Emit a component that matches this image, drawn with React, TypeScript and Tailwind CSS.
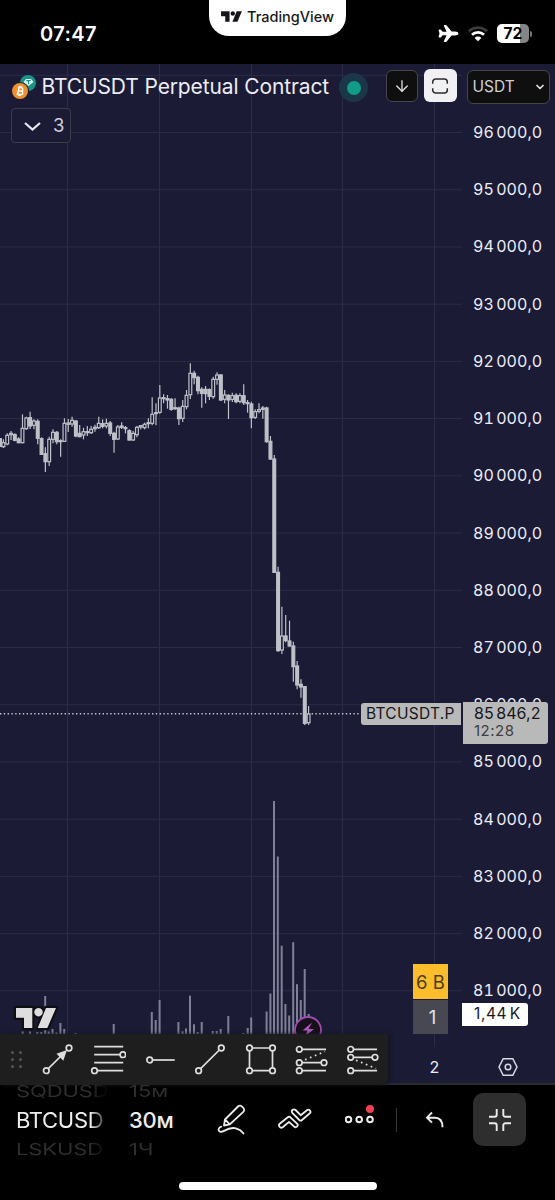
import { ArrowDown, ChevronDown } from "lucide-react";
import { IoAirplane } from "react-icons/io5";

type Candle = [high: number, low: number, top: number, bottom: number, filled: 0 | 1];

// Values are in thirds of a pixel below CANDLE_TOP
const CANDLE_TOP = 286;
const CANDLE_STEP = 3.815;

const candles: Candle[] = [
  [268, 294, 278, 290, 0],
  [250, 286, 256, 282, 0],
  [243, 270, 250, 254, 0],
  [250, 274, 254, 271, 1],
  [262, 280, 267, 278, 1],
  [193, 280, 235, 278, 0],
  [200, 240, 204, 236, 0],
  [185, 237, 203, 228, 1],
  [208, 238, 213, 226, 0],
  [208, 283, 214, 265, 1],
  [262, 315, 266, 313, 1],
  [292, 366, 311, 335, 1],
  [260, 348, 268, 335, 0],
  [238, 280, 247, 268, 0],
  [243, 283, 247, 275, 1],
  [268, 320, 272, 275, 1],
  [205, 276, 220, 274, 0],
  [207, 246, 219, 223, 0],
  [200, 230, 211, 222, 0],
  [211, 262, 213, 258, 1],
  [225, 262, 250, 260, 1],
  [233, 268, 245, 255, 0],
  [228, 258, 245, 248, 1],
  [228, 252, 238, 248, 0],
  [224, 245, 232, 236, 0],
  [200, 237, 220, 233, 0],
  [208, 235, 221, 229, 1],
  [206, 235, 220, 228, 0],
  [213, 258, 219, 250, 1],
  [245, 308, 250, 268, 1],
  [225, 270, 231, 267, 0],
  [217, 237, 228, 232, 1],
  [228, 250, 233, 236, 1],
  [238, 272, 242, 270, 1],
  [243, 272, 250, 270, 0],
  [228, 262, 232, 254, 0],
  [225, 238, 227, 231, 0],
  [218, 238, 223, 233, 0],
  [205, 235, 218, 221, 0],
  [142, 226, 193, 220, 0],
  [160, 226, 188, 191, 1],
  [105, 191, 144, 187, 0],
  [133, 160, 143, 146, 0],
  [135, 176, 146, 150, 1],
  [145, 182, 148, 178, 1],
  [145, 180, 173, 176, 0],
  [170, 225, 174, 206, 1],
  [150, 216, 169, 205, 0],
  [120, 178, 136, 170, 0],
  [40, 147, 70, 134, 0],
  [62, 103, 70, 83, 1],
  [77, 133, 82, 122, 1],
  [112, 173, 118, 130, 1],
  [108, 160, 118, 131, 1],
  [115, 150, 119, 139, 1],
  [80, 146, 88, 140, 0],
  [67, 104, 75, 88, 0],
  [72, 153, 75, 150, 1],
  [120, 160, 135, 148, 0],
  [133, 207, 136, 150, 1],
  [128, 156, 137, 148, 0],
  [130, 160, 136, 155, 1],
  [130, 160, 137, 154, 0],
  [103, 165, 137, 158, 1],
  [150, 188, 158, 161, 1],
  [155, 235, 162, 203, 1],
  [178, 207, 185, 202, 0],
  [160, 190, 179, 184, 0],
  [168, 206, 174, 178, 1],
  [170, 278, 174, 275, 1],
  [258, 330, 274, 327, 1],
  [315, 668, 327, 667, 1],
  [650, 905, 667, 902, 1],
  [770, 912, 858, 900, 0],
  [795, 877, 858, 872, 1],
  [812, 890, 873, 888, 1],
  [875, 995, 888, 950, 1],
  [933, 1018, 948, 1005, 1],
  [988, 1043, 1003, 1011, 1],
  [1008, 1125, 1010, 1120, 1],
  [1068, 1125, 1092, 1118, 0],
];

// [x, height]
const volumes: [number, number][] = [
  [22.7, 2.5], [30, 2.5], [37.3, 2], [41.3, 2], [45.2, 38], [48.7, 2.5], [52.5, 5], [56.5, 1.5],
  [60.4, 11], [64.2, 5], [75.6, 1], [113.7, 10], [151.8, 22], [155.7, 14], [159.6, 34], [178.4, 12],
  [182.5, 2.7], [186, 5.5], [190, 38.3], [194, 9.7], [197.7, 2], [201.7, 12], [212.7, 3], [216.7, 3],
  [220.7, 5], [228.3, 18], [243.3, 1], [247.7, 6], [251.2, 16.5], [266.6, 22.5], [270.4, 40.5],
  [274, 233], [277.8, 177.5], [281.7, 88.3], [285.4, 30], [289.2, 18.5], [293.2, 91.8], [297, 49.8],
  [300.8, 34], [304.7, 65], [308.7, 20],
];

const prices = [
  "96 000,0", "95 000,0", "94 000,0", "93 000,0", "92 000,0", "91 000,0", "90 000,0", "89 000,0",
  "88 000,0", "87 000,0", "86 000,0", "85 000,0", "84 000,0", "83 000,0", "82 000,0", "81 000,0",
];

const gridX = [67.5, 159.5, 251.5, 342.5, 434.5];

export default function App() {
  return (
    <div className="flex h-[1200px] w-[555px] flex-col overflow-hidden bg-black font-['Inter',sans-serif] text-[#ececf4]">
      <StatusBar />
      <main className="relative flex h-[1021px] flex-col bg-[#1b1b36]">
        <div className="flex h-[970px]">
          <Chart />
          <PriceAxis />
        </div>
        <div className="flex h-[51px] border-b-2 border-[#29292e]">
          <Toolbar />
          <div className="flex flex-1 items-center pt-4">
            <span className="w-[93px] text-center text-[16px] leading-none">2</span>
            <svg className="ml-[17px] h-5 w-5" viewBox="0 0 20 20" fill="none" stroke="#d9d9e2" strokeWidth="1.5">
              <path d="M5.2 1.7h9.6L19 10l-4.2 8.3H5.2L1 10Z" />
              <circle cx="10" cy="10" r="2.8" />
            </svg>
          </div>
        </div>
        <ChartHeader />
      </main>
      <BottomBar />
    </div>
  );
}

const TradingViewMark = ({ className }: { className: string }) => (
  <svg className={className} viewBox="-2 -2 44 24" fill="currentColor">
    <path d="M0 0H16.3V20H8V9.7H0Z" />
    <circle cx="22.5" cy="4.2" r="4.2" />
    <path d="M30 0H40L31.3 20H21.7Z" />
  </svg>
);

const StatusBar = () => (
  <header className="flex h-16 shrink-0 items-start justify-between bg-black">
    <div className="w-[209px] pt-[22px] pl-10 text-[20px] leading-6 font-semibold tracking-[0.4px] text-white">07:47</div>
    <div className="flex h-9 w-[137px] items-center rounded-b-[20px] bg-white pb-[3px] pl-[11px] text-[#16161a]">
      <TradingViewMark className="h-[13px] w-[23px]" />
      <span className="ml-[4px] text-[14.5px] font-medium tracking-[0px]">TradingView</span>
    </div>
    <div className="flex w-[209px] items-center pt-[23px] pl-[92px] text-white">
      <IoAirplane className="h-[21px] w-[21px]" />
      <svg className="ml-[9px] h-[17px] w-5" viewBox="0 0 20 17" fill="none" strokeWidth="2.8">
        <path d="M1 6.2a13 13 0 0 1 18 0" stroke="#3c3c3c" />
        <path d="M4 9.8a8.6 8.6 0 0 1 12 0" stroke="#fff" />
        <path d="M10 16.2 6.6 13a4.8 4.8 0 0 1 6.8 0Z" fill="#fff" />
      </svg>
      <div className="ml-[9px] flex h-[19px] w-8 items-center justify-center rounded-[5px] bg-[linear-gradient(90deg,#fff_72%,#858585_72%)] text-[15.5px] font-bold text-black">
        72
      </div>
      <div className="ml-px h-[6px] w-[2px] rounded-r bg-[#777]" />
    </div>
  </header>
);

const ChartHeader = () => (
  <div className="absolute inset-x-0 top-0">
    <div className="flex items-start">
      <svg className="mt-[10px] ml-[11px] h-[26px] w-[26px] shrink-0" viewBox="0 0 26 26">
        <circle cx="17" cy="9" r="8" fill="#199386" />
        <path d="m12.5 8 2.5-3h5l2.5 3-5 4Z" fill="#e5f3f2" />
        <path d="M15.3 6.7h4.4M17.5 6.7v3.6" stroke="#199386" strokeWidth="1.2" />
        <circle cx="9" cy="17" r="9" fill="#1b1b36" />
        <circle cx="9" cy="17" r="8" fill="#ee9030" />
        <g transform="rotate(12 9 17)" fill="none" stroke="#fff" strokeWidth="1.4">
          <path d="M7.3 13.5v7M6.2 13.6h3.6a1.6 1.6 0 0 1 0 3.3H7.3h3a1.7 1.7 0 0 1 0 3.5H6.2M8.3 12v1.5M10 12v1.5M8.3 20.5V22M10 20.5V22" />
        </g>
      </svg>
      <h1 className="mt-[9px] ml-[4.5px] w-[297.5px] text-[21px] leading-7 tracking-[-0.12px] whitespace-nowrap">BTCUSDT Perpetual Contract</h1>
      <div className="mt-[9px] flex h-[29px] w-[29px] shrink-0 items-center justify-center rounded-full bg-[#1c3649]">
        <div className="h-[14px] w-[14px] rounded-full bg-[#109c86]" />
      </div>
      <div className="mt-[6px] ml-[18px] flex h-8 w-8 shrink-0 items-center justify-center rounded-[6px] border border-[#45454a] bg-[#0f0f10]">
        <ArrowDown size={18} strokeWidth={1.8} color="#dedede" />
      </div>
      <div className="mt-[5px] ml-[5.5px] flex h-[33px] w-[33px] shrink-0 items-center justify-center rounded-[6px] bg-[#f1f1f4]">
        <svg className="h-[18px] w-[18px]" viewBox="0 0 18 18" fill="none" stroke="#2b2b2f" strokeWidth="1.5">
          <path d="M1.700 6.700V5a3 3 0 0 1 3-3h8.600a3 3 0 0 1 3 3v1.700M1.700 11.300V13a3 3 0 0 0 3 3h8.600a3 3 0 0 0 3-3v-1.700" />
        </svg>
      </div>
      <div className="mt-[6px] ml-[10px] flex h-[34px] w-[83px] shrink-0 items-center justify-between rounded-[6px] border border-[#45454a] bg-[#0f0f10] pr-[3px] pl-[5px] text-[15.5px] text-[#cfcfd3]">
        USDT
        <ChevronDown size={12} strokeWidth={3.5} color="#dedede" />
      </div>
    </div>
    <div className="mt-[4px] ml-[11px] flex h-[35px] w-[60px] items-center rounded-[4px] border border-[#3c3c48] bg-[#1b1b36] pl-[12px]">
      <svg className="mt-px h-[9px] w-[17px]" viewBox="0 0 17 9" fill="none" stroke="#e8e8f0" strokeWidth="2.2">
        <path d="m1 1 7.5 6.5L16 1" />
      </svg>
      <span className="mt-px ml-[12px] text-[18.5px] text-[#d0d0dc]">3</span>
    </div>
  </div>
);

const Chart = () => (
  <div className="relative h-[970px] w-[462px] shrink-0">
    <svg className="h-[984px] w-[462px] overflow-visible" viewBox="0 0 462 984">
      <g stroke="#2c2c49">
        {gridX.map((x) => (
          <line key={x} x1={x} x2={x} y1="0" y2="983" />
        ))}
        {[...Array(17)].map((_, i) => (
          <line key={i} x1="0" x2="462" y1={11.3 + i * 57.22} y2={11.3 + i * 57.22} />
        ))}
      </g>
      <g fill="#7f7f97">
        {volumes.map(([x, h]) => (
          <rect key={x} x={x - 1} y={970 - h} width="2" height={h} />
        ))}
      </g>
      <line x1="0" x2="362" y1="649.8" y2="649.8" stroke="#c4c4cc" strokeWidth="1.5" strokeDasharray="1.4 2.4" />
      {candles.map(([high, low, top, bottom, filled], i) => {
        const x = 3.4 + i * CANDLE_STEP;
        const y = (v: number) => CANDLE_TOP + v / 3;
        return (
          <g key={i} stroke="#c0c0c8" strokeWidth="1.2" fill={filled ? "#c0c0c8" : "#1b1b36"}>
            <line x1={x} x2={x} y1={y(high)} y2={y(low)} />
            <rect x={x - 1.4} y={y(top)} width="2.8" height={Math.max(y(bottom) - y(top), 0.5)} />
          </g>
        );
      })}
      <rect x="0" y="374" width="2" height="9" fill="#c0c0c8" />
    </svg>
    <div className="absolute top-[639px] right-[1px] flex h-[22px] w-[100px] items-center rounded-l-[3px] bg-[#b9b9b9] pl-[5px] text-[15.5px] tracking-[0.28px] text-[#17171b]">
      BTCUSDT.P
    </div>
    <svg className="absolute top-[941px] left-[13px] h-[26px] w-[46px]" viewBox="-3 -3 46 26" fill="#dedede" stroke="#101014" strokeWidth="4.5" paintOrder="stroke" strokeLinejoin="round">
      <path d="M0 0H16.3V20H8V9.7H0ZM30 0H40L31.3 20H21.7ZM22.5 0a4.2 4.2 0 1 0 .01 0Z" />
    </svg>
    <svg className="absolute top-[952px] left-[294px] h-[28px] w-[28px]" viewBox="0 0 28 28">
      <circle cx="14" cy="14" r="13" fill="#160f1c" stroke="#a04bac" strokeWidth="1.8" />
      <path d="m18 6.5-9.5 8h5l-2.5 6 9-7.5h-5.500Z" fill="#b058be" />
    </svg>
    <div className="absolute top-[900px] left-[413px] w-[35px] text-center text-[18.5px]">
      <div className="flex h-[35px] items-center justify-center bg-[#fbbd2c] pt-[2px] text-[#4d3c14]">6 B</div>
      <div className="mt-px flex h-[34px] items-center justify-center bg-[#484852] pt-[2px] pl-1 text-[#e4e4ea]">1</div>
    </div>
  </div>
);

const PriceAxis = () => (
  <div className="relative flex-1 pt-[39.4px] pl-[11px] text-[16px] tracking-[0.05px]">
    {prices.map((price) => (
      <div key={price} className="flex h-[57.22px] items-center tabular-nums [word-spacing:-2px]">
        {price}
      </div>
    ))}
    <div className="absolute top-[638px] left-px h-[42px] w-[85px] rounded-r-[3px] bg-[#b9b9b9] pt-[2px] pl-[11px] leading-[18px] text-[#17171b]">
      <div className="[word-spacing:-2px]">85 846,2</div>
      <div className="text-[15px] tracking-[0.5px] text-[#3f3f43]">12:28</div>
    </div>
    <div className="absolute top-[939px] left-0 flex h-[23px] w-[66px] items-center rounded-r-[3px] bg-white pb-[2px] pl-[12px] text-[15.5px] tracking-[0.6px] text-[#17171b] [word-spacing:-2.5px]">
      1,44 K
    </div>
  </div>
);

const ring = { r: 2.8, fill: "#1e1e1e" };

const tools = [
  <>
    <path d="M7.3 28.7 24 12" />
    <path d="m28 8-10.5 3.7 6.8 7Z" fill="#dedede" stroke="none" />
    <circle cx="7.3" cy="28.7" {...ring} />
    <circle cx="30" cy="6" {...ring} />
  </>,
  <>
    <path d="M4.2 4.7h29M4.2 12.7h29M4.2 20.7h29M4.2 28.7h29" />
    <circle cx="32.9" cy="12.7" {...ring} />
    <circle cx="4.5" cy="28.7" {...ring} />
  </>,
  <>
    <path d="M8.7 18h25" />
    <circle cx="8.7" cy="18" {...ring} />
  </>,
  <>
    <path d="M7.6 28.7 30.3 6" />
    <circle cx="7.6" cy="28.7" {...ring} />
    <circle cx="30.3" cy="6" {...ring} />
  </>,
  <>
    <path d="M7.5 6h23v22.7h-23Z" />
    <circle cx="7.5" cy="6" {...ring} />
    <circle cx="30.5" cy="6" {...ring} />
    <circle cx="7.5" cy="28.7" {...ring} />
    <circle cx="30.5" cy="28.7" {...ring} />
  </>,
  <>
    <path d="M6.3 7.3H33M6.3 20.7H31M6.3 28.7H33" />
    <path d="m12 17.8 20-8.3" strokeDasharray="1.7 3.6" />
    <circle cx="6.3" cy="7.3" {...ring} />
    <circle cx="6.3" cy="20.7" {...ring} />
    <circle cx="31" cy="20.7" {...ring} />
    <circle cx="6.3" cy="28.7" {...ring} />
  </>,
  <>
    <path d="M6.7 7.3H33M6.7 15.3H31M6.7 28.7H33" />
    <path d="m12 18.2 20 8.3" strokeDasharray="1.7 3.6" />
    <circle cx="6.7" cy="7.3" {...ring} />
    <circle cx="6.7" cy="15.3" {...ring} />
    <circle cx="31" cy="15.3" {...ring} />
    <circle cx="6.7" cy="28.7" {...ring} />
  </>,
];

const Toolbar = () => (
  <div className="relative flex h-[51px] w-[388px] shrink-0 items-center rounded-br-[6px] bg-[#1e1e1e] shadow-[2px_0_4px_#15151f]">
    <div className="ml-[10.5px] grid w-[21.1px] grid-cols-[8px_8px] gap-y-[4px]">
      {[...Array(6)].map((_, i) => (
        <div key={i} className="h-[3px] w-[3px] rounded-full bg-[#555]" />
      ))}
    </div>
    {tools.map((tool, i) => (
      <div key={i} className="flex w-[50.8px] justify-center">
        <svg className="h-9 w-9" viewBox="0 0 36 36" fill="none" stroke="#dedede" strokeWidth="1.7">
          {tool}
        </svg>
      </div>
    ))}
  </div>
);

const BottomBar = () => (
  <footer className="flex h-[115px] flex-col overflow-hidden bg-black">
    <div className="flex h-[78px] items-start">
      <div className="h-[78px] w-[113px] overflow-hidden mask-r-from-80% mask-r-to-96% pl-4 text-[22px] leading-[29px]">
        <div className="-mt-[8px] scale-y-75 tracking-[-0.1px] text-[#2e2e2e]">SQDUSD</div>
        <div className="tracking-[-0.3px] text-[#ededed]">BTCUSD</div>
        <div className="scale-y-75 tracking-[-0.1px] text-[#2e2e2e]">LSKUSD</div>
      </div>
      <div className="h-[78px] w-[60px] overflow-hidden pl-4 text-[22px] leading-[29px]">
        <div className="-mt-[8px] scale-y-75 text-[#2e2e2e]">15м</div>
        <div className="font-medium tracking-[-0.2px] text-[#ededed]">30м</div>
        <div className="scale-y-75 text-[#2e2e2e]">1Ч</div>
      </div>
      <svg className="mt-[18px] ml-[43px] h-8 w-8" viewBox="0 0 32 32" fill="none" stroke="#ececec" strokeWidth="1.8" strokeLinecap="round" strokeLinejoin="round">
        <path d="m9 16.500 13-13a2.700 2.700 0 0 1 3.900 0l1.400 1.400a2.700 2.700 0 0 1 0 3.900L13.800 21.300 8 22.500ZM9 16.500l4.800 4.800" />
        <path d="M5.300 23.600c-2.200.8-3.300 2.600-2.500 4 .8 1.600 3 1.500 5.200.3 5-2.800 8.600-3.500 12-2.500 3.200.9 5.500 2.400 7.500 5.200" />
      </svg>
      <svg className="mt-[23px] ml-[30px] h-[22px] w-[34px]" viewBox="0 0 34 22" fill="none" stroke="#ececec" strokeWidth="1.8" strokeLinejoin="round">
        <path d="M2 15.5 9.8 9.3a2 2 0 0 1 2.600 0L19 15.600a2 2 0 0 1-2.800 3L11 13.900 4.700 19.200a2.200 2.200 0 0 1-2.700-3.700Z" />
        <path d="M14.5 2a2.100 2.100 0 0 1 3 0l5.200 5.200 6.200-5a2.100 2.100 0 0 1 2.700 3.300L24 12a2 2 0 0 1-2.700 0L14.500 5.100a2.200 2.200 0 0 1 0-3.100Z" />
      </svg>
      <svg className="mt-[19px] ml-[33px] h-5 w-8" viewBox="0 0 32 20" fill="none" stroke="#ececec" strokeWidth="2">
        <circle cx="3.5" cy="15.500" r="2.8" />
        <circle cx="14.2" cy="15.500" r="2.8" />
        <circle cx="25" cy="15.500" r="2.8" />
        <circle cx="25" cy="5" r="4" fill="#f23f55" stroke="none" />
      </svg>
      <div className="mt-[23px] ml-[19px] h-6 w-px bg-[#383838]" />
      <svg className="mt-[26px] ml-[28px] h-[18px] w-5" viewBox="0 0 20 18" fill="none" stroke="#ececec" strokeWidth="1.9">
        <path d="M7 1.500 2 6.700l5 5M2.200 6.700H10c5 0 7.500 3 7.500 9.500" />
      </svg>
      <div className="mt-[8px] ml-[28px] flex h-[53px] w-[53px] items-center justify-center rounded-[10px] bg-[#2e2e2e]">
        <svg className="h-[22px] w-[22px]" viewBox="0 0 22 22" fill="none" stroke="#ececec" strokeWidth="1.9">
          <path d="M7.700 0v5.700a2 2 0 0 1-2 2H0M14.300 0v5.700a2 2 0 0 0 2 2H22M7.700 22v-5.700a2 2 0 0 0-2-2H0M14.300 22v-5.700a2 2 0 0 1 2-2H22" />
        </svg>
      </div>
    </div>
    <div className="mt-[19px] ml-[179px] h-2 w-[198px] rounded-full bg-white" />
  </footer>
);
